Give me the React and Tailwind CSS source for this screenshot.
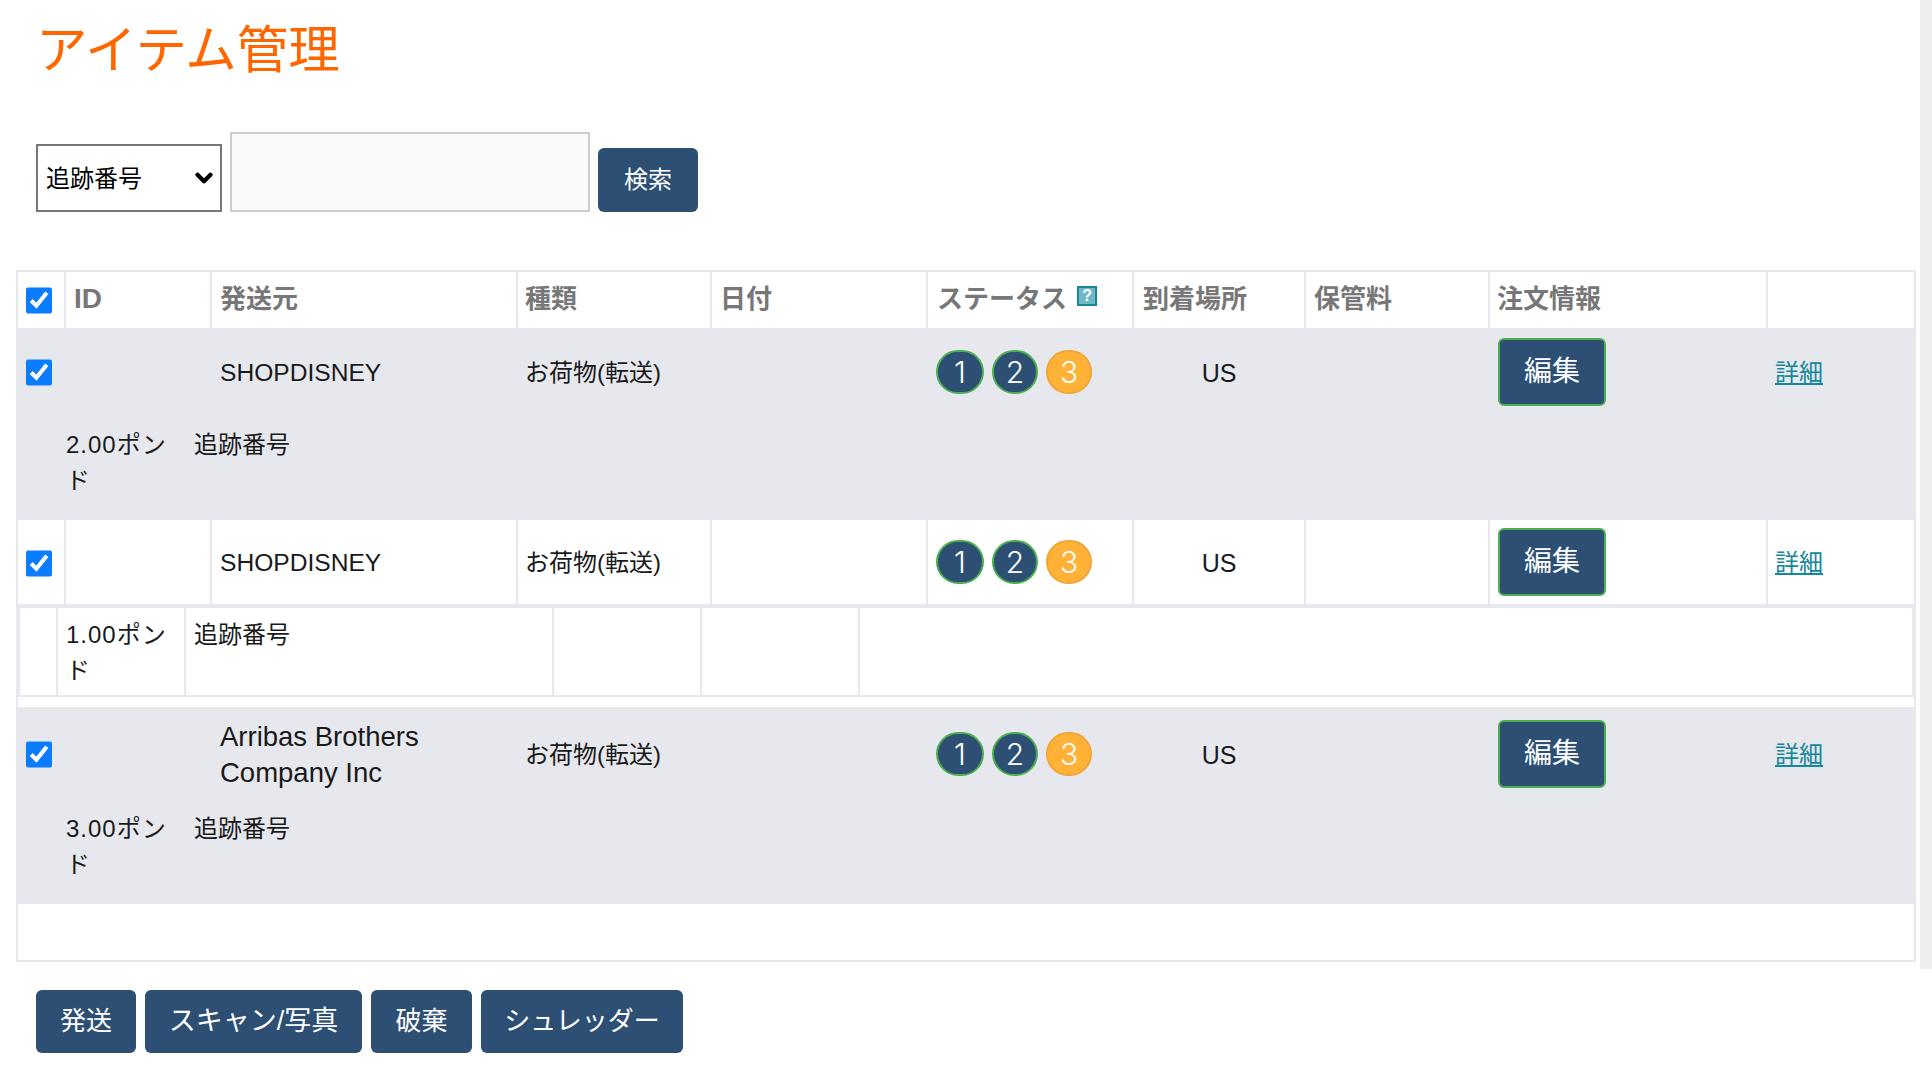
import React from 'react'
import { ChevronDown } from 'lucide-react'

const headers = [
  { label: 'ID', cls: 'text-[28px]' },
  { label: '発送元', cls: 'text-[26px]' },
  { label: '種類', cls: 'pl-[7px] text-[26px]' },
  { label: '日付', cls: 'text-[26px]' },
  { label: 'ステータス', cls: 'pl-[9px] text-[26px]' },
  { label: '到着場所', cls: 'pl-[9px] text-[26px]' },
  { label: '保管料', cls: 'text-[26px]' },
  { label: '注文情報', cls: 'pl-[7px] text-[26px]' },
  { label: '', cls: '' },
]

function Steps() {
  return (
    <div className="flex gap-[8px] font-['Inter',sans-serif] text-[30px] font-light text-white">
      <span className="flex h-[44px] w-[48px] items-center justify-center rounded-full border-2 border-[#4caf50] bg-[#2c4f73]">1</span>
      <span className="flex h-[44px] w-[46px] items-center justify-center rounded-full border-2 border-[#4caf50] bg-[#2c4f73]">2</span>
      <span className="flex h-[44px] w-[46px] items-center justify-center rounded-full border-2 border-[#f0a537] bg-[#ffb236]">3</span>
    </div>
  )
}

function Check() {
  return <input type="checkbox" defaultChecked className="block h-[27px] w-[26px] accent-[#0a7cff]" />
}

// second line of a row, has its own columns
function SubRow({ price }) {
  return (
    <div className="grid h-[91px] grid-cols-[38px_128px_368px_148px_158px_1fr] border-2 border-[#e7e8ed] text-[24px] leading-[36px]">
      <div className="border-r-2 border-[#e7e8ed]"></div>
      <div className="border-r-2 border-[#e7e8ed] px-2 pt-[9px] tracking-[1px]">{price}</div>
      <div className="border-r-2 border-[#e7e8ed] px-2 pt-[9px]">追跡番号</div>
      <div className="border-r-2 border-[#e7e8ed]"></div>
      <div className="border-r-2 border-[#e7e8ed]"></div>
      <div></div>
    </div>
  )
}

function MainRow({ from, fromSize, height, gray, bottom }) {
  const cell = `border-r-2 border-[#e7e8ed] px-2 ${bottom ? 'border-b-2' : ''}`
  return (
    <tr className={`${gray ? 'bg-[#e7e8ed]' : 'bg-white'} ${height}`}>
      <td className={`${cell} pt-[2px]`}><Check /></td>
      <td className={cell}></td>
      <td className={`${cell} pt-[2px] ${fromSize}`}>{from}</td>
      <td className={`${cell} pl-[7px] pt-[2px]`}>お荷物(転送)</td>
      <td className={cell}></td>
      <td className={cell}><Steps /></td>
      <td className={`${cell} pt-[2px] text-center text-[25px]`}>US</td>
      <td className={cell}></td>
      <td className={cell}>
        <button className="flex h-[68px] w-[108px] items-center justify-center rounded-[6px] border-2 border-[#4caf50] bg-[#2c4f73] text-[28px] text-white">編集</button>
      </td>
      <td className={`px-[7px] pt-[2px] ${bottom ? 'border-b-2 border-[#e7e8ed]' : ''}`}>
        <a href="#" className="text-[#17879b] underline">詳細</a>
      </td>
    </tr>
  )
}

function ActionButton({ children, className }) {
  return (
    <button className={`h-[63px] rounded-[6px] bg-[#2c4f73] text-white ${className}`}>{children}</button>
  )
}

export default function App() {
  return (
    <div className="flex h-[1071px] items-start overflow-hidden bg-white font-['Liberation_Sans','Noto_Sans_CJK_JP',sans-serif] text-[#1a1a1a]">
      <main className="w-[1920px] pl-4 pr-1">
        <h1 className="ml-[20px] h-[96px] text-[51.5px] leading-[100px] text-[#ff6600]">アイテム管理</h1>

        <div className="ml-[20px] mt-[36px] flex items-end gap-[8px]">
          <div className="relative h-[68px] w-[186px]">
            <select className="h-full w-full appearance-none border-2 border-[#767676] bg-white pl-[8px] pt-[2px] text-[24px] text-black">
              <option>追跡番号</option>
            </select>
            <ChevronDown className="pointer-events-none absolute right-[5px] top-[21px] h-[26px] w-[26px] text-black" strokeWidth={4} />
          </div>
          <input type="text" className="h-[80px] w-[360px] border-2 border-[#cccccc] bg-[#fafafa]" />
          <button className="h-[64px] w-[100px] rounded-[6px] bg-[#2c4f73] text-[24px] text-white">検索</button>
        </div>

        <div className="mt-[58px] h-[692px] border-2 border-[#e7e8ed]">
          <table className="w-full table-fixed border-separate border-spacing-0 text-left text-[24px] leading-[36px]">
            <colgroup>
              <col className="w-[48px]" />
              <col className="w-[146px]" />
              <col className="w-[306px]" />
              <col className="w-[194px]" />
              <col className="w-[216px]" />
              <col className="w-[206px]" />
              <col className="w-[172px]" />
              <col className="w-[184px]" />
              <col className="w-[278px]" />
              <col className="w-[146px]" />
            </colgroup>
            <thead>
              <tr className="h-[56px]">
                <th className="border-r-2 border-[#e7e8ed] px-2"><Check /></th>
                {headers.map((h, i) => (
                  <th key={i} className={`px-2 pb-[3px] font-bold text-[#777777] ${h.cls} ${i < 8 ? 'border-r-2 border-[#e7e8ed]' : ''}`}>
                    {h.label}
                    {h.label === 'ステータス' && (
                      <span className="relative -top-[5px] ml-[10px] inline-flex h-[20px] w-[20px] items-center justify-center border-2 border-[#17879b] bg-[#6fb9c7] align-middle text-[16px] leading-none text-white">?</span>
                    )}
                  </th>
                ))}
              </tr>
            </thead>
            <tbody>
              <MainRow from="SHOPDISNEY" fromSize="text-[24.6px]" height="h-[87px]" gray />
              <tr className="bg-[#e7e8ed]">
                <td colSpan={10} className="h-[105px] pb-[13px] pt-[1px]"><SubRow price="2.00ポンド" /></td>
              </tr>
              <MainRow from="SHOPDISNEY" fromSize="text-[24.6px]" height="h-[86px]" bottom />
              <tr>
                <td colSpan={10} className="pb-[10px]"><SubRow price="1.00ポンド" /></td>
              </tr>
              <MainRow from="Arribas Brothers Company Inc" fromSize="text-[27.5px]" height="h-[93px]" gray />
              <tr className="bg-[#e7e8ed]">
                <td colSpan={10} className="h-[104px] pb-[13px]"><SubRow price="3.00ポンド" /></td>
              </tr>
            </tbody>
          </table>
        </div>

        <div className="ml-[20px] mt-[28px] flex gap-[9px]">
          <ActionButton className="w-[100px] text-[26px]">発送</ActionButton>
          <ActionButton className="w-[217px] text-[27px]">スキャン/写真</ActionButton>
          <ActionButton className="w-[101px] text-[26px]">破棄</ActionButton>
          <ActionButton className="w-[202px] text-[26px]">シュレッダー</ActionButton>
        </div>
      </main>
      <div className="h-[969px] w-[12px] bg-[#eeeeee]"></div>
    </div>
  )
}
